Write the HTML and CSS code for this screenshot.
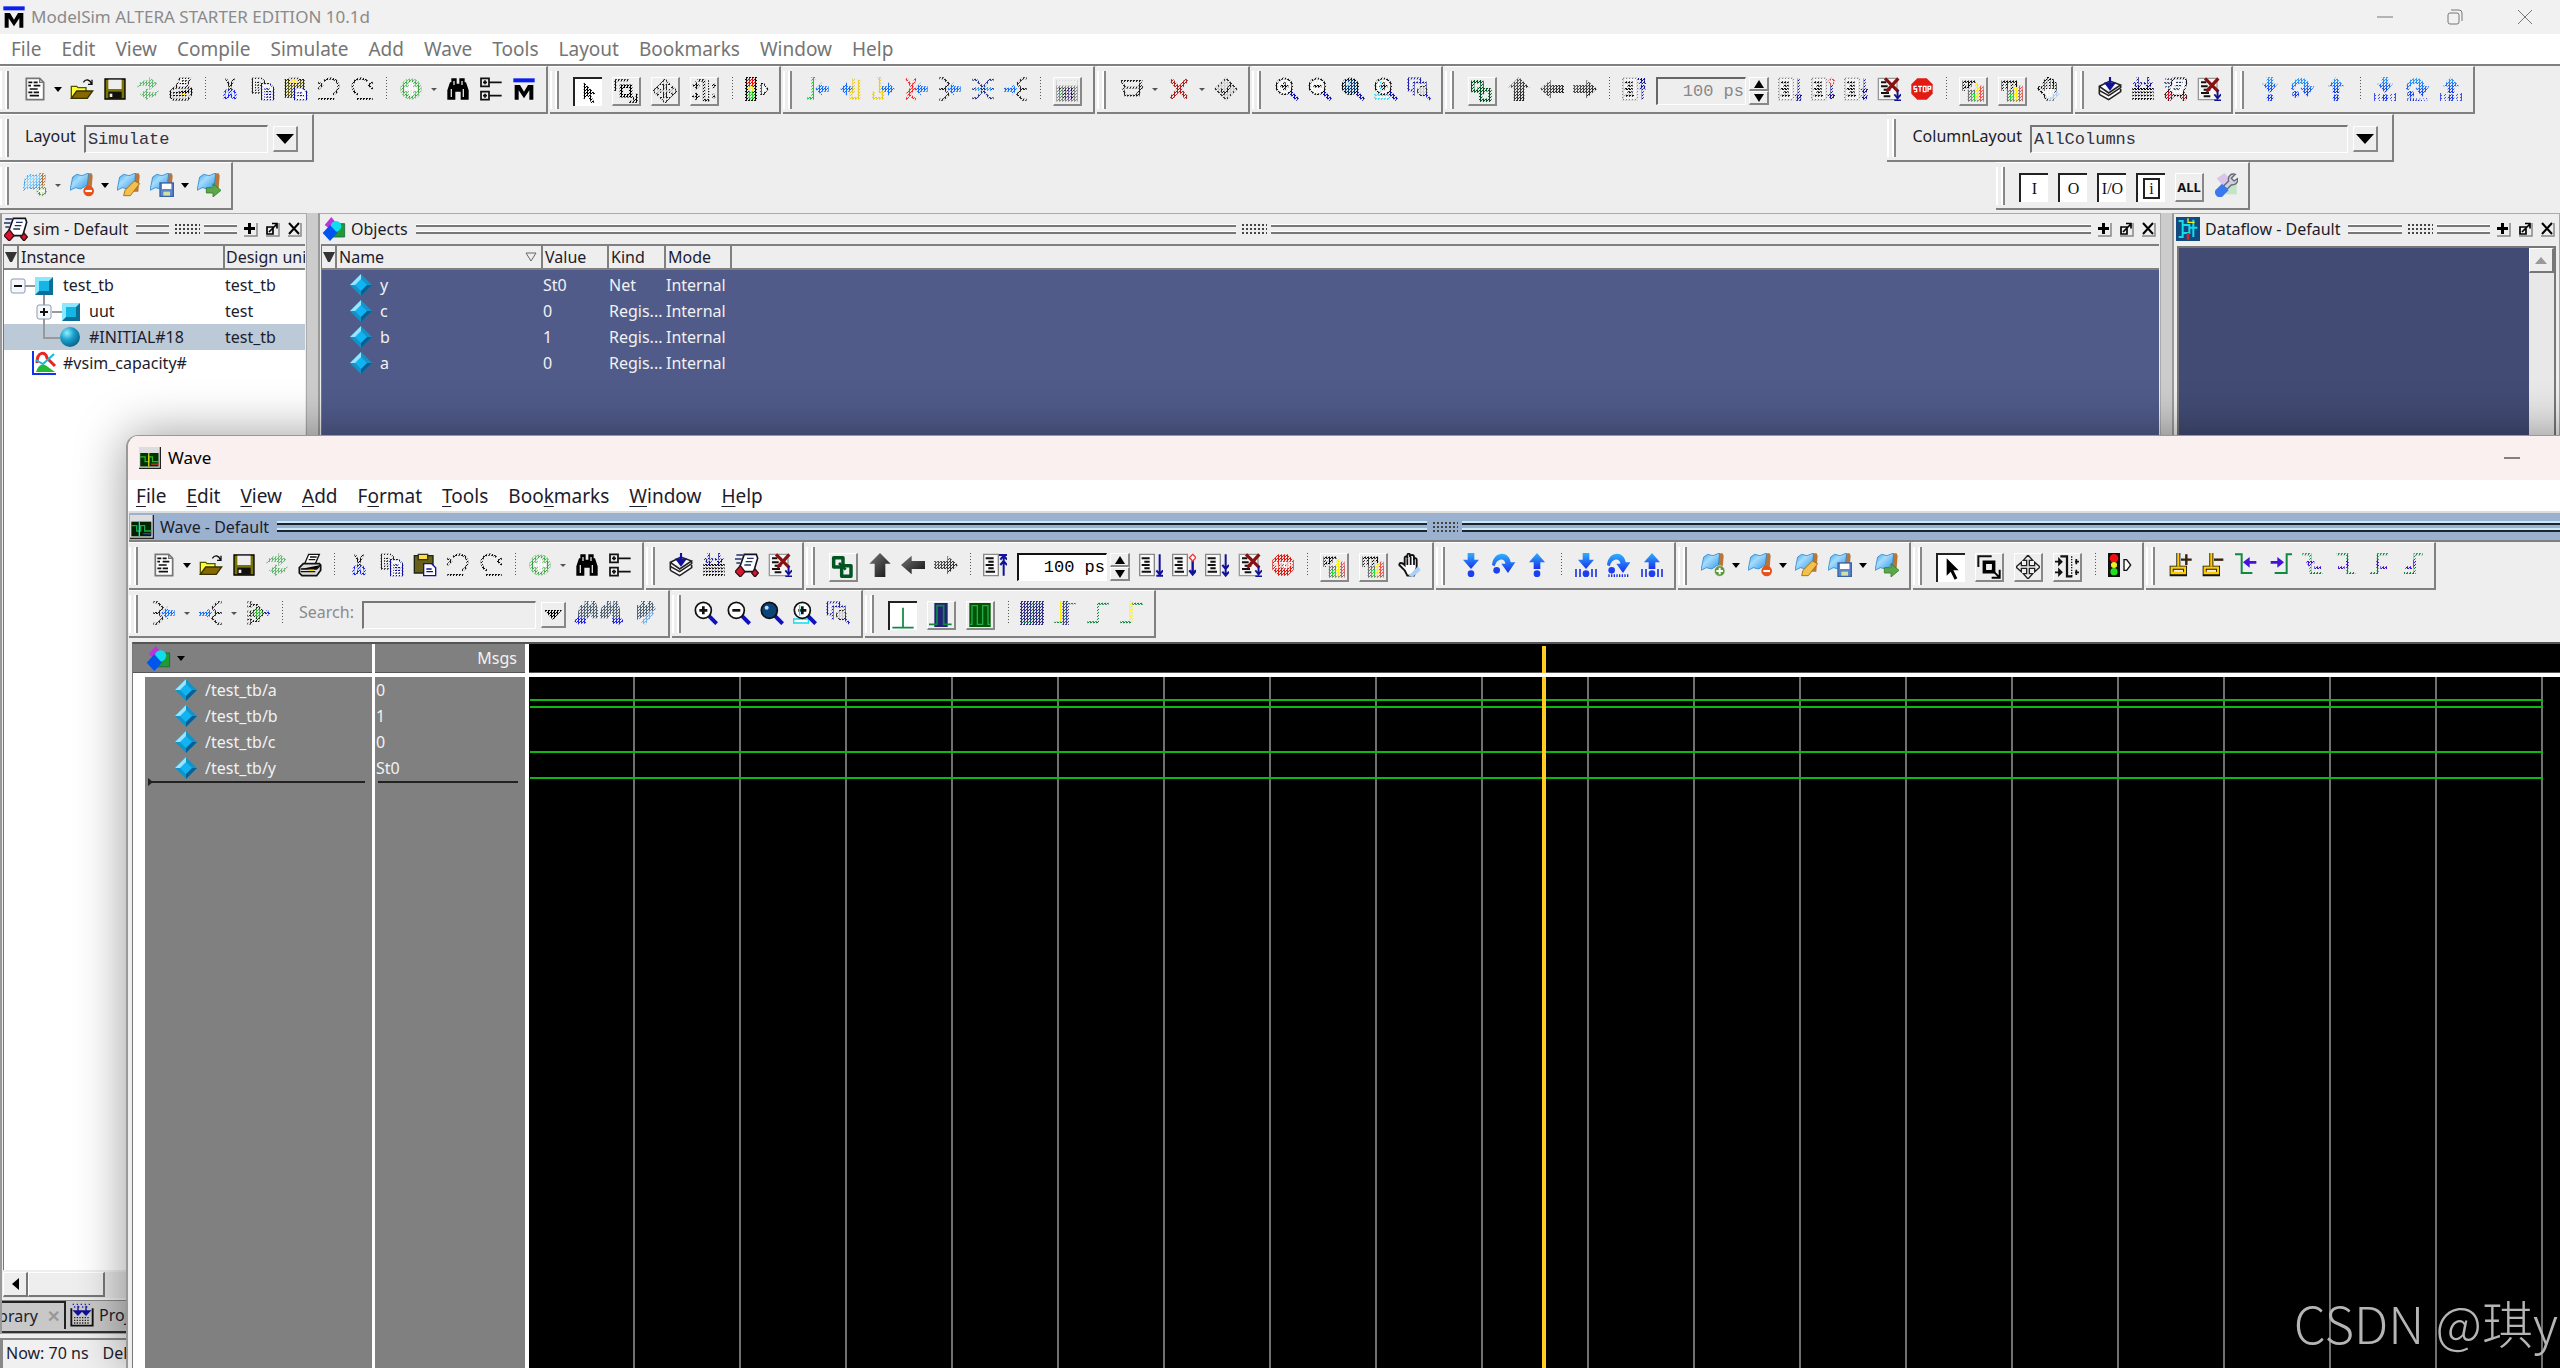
FILE: index.html
```html
<!DOCTYPE html>
<html lang="en">
<head>
<meta charset="utf-8">
<title>ModelSim ALTERA STARTER EDITION 10.1d</title>
<link rel="stylesheet" href="styles.css">
</head>
<body>
<svg class="sprite" aria-hidden="true">
  <defs>
    <linearGradient id="gDark" x1="0" y1="0" x2="1" y2="1"><stop offset="0" stop-color="#777"/><stop offset="1" stop-color="#111"/></linearGradient>
    <linearGradient id="gBlue" x1="0" y1="0" x2="0" y2="1"><stop offset="0" stop-color="#2fb0ff"/><stop offset="1" stop-color="#1a30e8"/></linearGradient>
    <radialGradient id="gBall" cx=".35" cy=".3" r=".7"><stop offset="0" stop-color="#8ff0ff"/><stop offset=".5" stop-color="#1ba0cc"/><stop offset="1" stop-color="#0a6890"/></radialGradient>
    <linearGradient id="gFlag" x1="0" y1="0" x2="1" y2="1"><stop offset="0" stop-color="#2f9be8"/><stop offset=".4" stop-color="#a5dcff"/><stop offset="1" stop-color="#2b92e0"/></linearGradient>
  </defs>
  <symbol id="logo" viewBox="0 0 18 18"><path d="M1 1h16v3H1z" fill="#0a20f0"/><path d="M2 17V6h4l3 5 3-5h4v11h-3v-7l-4 6-4-6v7z" fill="#000"/></symbol>
  <symbol id="new" viewBox="0 0 18 18"><path d="M2.500 1h10l3 3v13h-13z" fill="#fff" stroke="#777" stroke-width="1.300"/><path d="M4 4h3M8 4h3M4 6.500h2M8 6.500h5M5 9h6M4 11.500h3M8 11.500h4M5 14h7" stroke="#111" stroke-width="1.300"/><path d="M12.500 1v3h3" fill="none" stroke="#777"/></symbol>
  <symbol id="open" viewBox="0 0 18 18"><path d="M1 16V7h4l1 1h6v3" fill="#ff3" stroke="#550"/><path d="M1 16l4-5.500h12L13 16z" fill="#860" stroke="#330"/><path d="M10 4c2-3 5-2 6 1M16.500 2v3.500h-3" fill="none" stroke="#111"/></symbol>
  <symbol id="save" viewBox="0 0 18 18"><path d="M1.500 1.500h15v15h-15z" fill="#7a7400" stroke="#000"/><path d="M4 2h10v7H4z" fill="#eee"/><path d="M4 11h10v5H4z" fill="#111"/><path d="M5 12.500h2V15H5z" fill="#eee"/></symbol>
  <symbol id="reload" viewBox="0 0 18 18"><path d="M1 8c1-5 5-6 9-5V0l6 5-6 5V7C6 6 3 6 1 8zM17 10c-1 5-5 6-8 5v3l-6-5 6-5v3c4 1 6 1 8-1z" fill="#6ab878"/></symbol>
  <symbol id="print" viewBox="0 0 18 18"><path d="M5 8l3-7h8l-3 7" fill="#fff" stroke="#111"/><path d="M1 11l3-3h12l1 1v4l-3 4H3l-2-2z" fill="#ddd" stroke="#111" stroke-width="1.300"/><path d="M2 12h12l3-3M9 3h5M8 5h5M2 14h11" stroke="#111"/><path d="M8 12.500h4v1H8z" fill="#fd0"/></symbol>
  <symbol id="cut" viewBox="0 0 18 18"><path d="M6 1l4 9M12 1L8 10" stroke="#111" stroke-width="1.500"/><path d="M9 10c-4-1-5 3-4 6 3 0 4-3 4-6 0 3 1 6 4 6 1-3 0-7-4-6" fill="none" stroke="#12f" stroke-width="1.500"/></symbol>
  <symbol id="copy" viewBox="0 0 18 18"><path d="M1 1h7l2 2v9H1zM3 4h4M3 6h5M3 8h5M3 10h4" fill="none" stroke="#222"/><path d="M8 5h6l3 3v9H8z" fill="#fff" stroke="#119"/><path d="M10 9h4M10 11h6M10 13h6M10 15h6" stroke="#119"/></symbol>
  <symbol id="paste" viewBox="0 0 18 18"><path d="M1 2h14v13H1z" fill="#66601a" stroke="#221"/><path d="M4 1h7v4H4z" fill="#fd4" stroke="#332"/><path d="M8 8h6l3 3v6H8z" fill="#fff" stroke="#119"/><path d="M10 12h4M10 14h5" stroke="#119"/></symbol>
  <symbol id="undo" viewBox="0 0 18 18"><path d="M5 3c5-4 11-1 11 4 0 3-1 5-4 6M1 4l3 2-3 3M1 16.500h12" fill="none" stroke="#111" stroke-width="1.500"/></symbol>
  <symbol id="redo" viewBox="0 0 18 18"><path d="M13 3C8-1 2 2 2 7c0 3 1 5 4 6M17 4l-3 2 3 3M5 16.500h12" fill="none" stroke="#111" stroke-width="1.500"/></symbol>
  <symbol id="plus" viewBox="0 0 18 18"><circle cx="9" cy="9" r="8" fill="#7fc97f"/><circle cx="9" cy="9" r="6" fill="none" stroke="#3a9a4a"/><path d="M9 4v10M4 9h10" stroke="#fff" stroke-width="3"/></symbol>
  <symbol id="find" viewBox="0 0 18 18"><path d="M3 4h1V1h4v4h2V1h4v3h1l2 6v7h-6v-6H7v6H1v-7z"/><path d="M4 9v6M13 9v6M6 3v3M12 3v3" stroke="#ddd"/></symbol>
  <symbol id="tree" viewBox="0 0 18 18"><path d="M1.500 1h6v6h-6zM1.500 11h6v6h-6zM8 4h9M8 14h9M3 4h3M3 14h3M4.500 2.500v3M4.500 12.500v3" fill="none" stroke="#111" stroke-width="1.300"/></symbol>
  <symbol id="pointer" viewBox="0 0 18 18"><path d="M5 1v13l3-3 3 6 2-1-3-6h4z" fill="#000"/></symbol>
  <symbol id="zoomsel" viewBox="0 0 18 18"><path d="M1 9V1h10" fill="none" stroke="#111" stroke-width="1.500"/><path d="M5.500 5.500h7v7h-7z" fill="none" stroke="#000" stroke-width="2.600"/><path d="M11 11l6 6M17 11v6h-6" stroke="#000" fill="none" stroke-width="1.500"/></symbol>
  <symbol id="pan" viewBox="0 0 18 18"><path d="M9 0l3.500 4H10v4h4V5.500L18 9l-4 3.500V10h-4v4h2.500L9 18l-3.500-4H8v-4H4v2.500L0 9l4-3.500V8h4V4H5.500z" fill="#eee" stroke="#222"/></symbol>
  <symbol id="edit" viewBox="0 0 18 18"><path d="M0 5h4M0 13h4M15 5h3M15 13h3M3 3l2 2-2 2zM3 11l2 2-2 2zM16 3v4M16 11v4" stroke="#111" stroke-width="1.300"/><path d="M4 1h5v15h4" fill="none" stroke="#111" stroke-width="1.700"/><path d="M12.500 1v15" stroke="#111" stroke-dasharray="1 1"/></symbol>
  <symbol id="light" viewBox="0 0 18 18"><path d="M0 0h9v18H0z" fill="#111"/><circle cx="4.500" cy="4" r="3.200" fill="#e11"/><circle cx="4.500" cy="9" r="2.300" fill="#ee2"/><circle cx="4.500" cy="14" r="2.700" fill="#2d2"/><path d="M12 5v8h2l3-4-3-4z" fill="#fff" stroke="#111"/></symbol>
  <symbol id="aL" viewBox="0 0 18 18"><path d="M7 9l5-5v3h5v4h-5v3z" fill="#1670ff"/></symbol>
  <symbol id="c1" viewBox="0 0 18 18"><path d="M7 1H5v15H1" fill="none" stroke="#1c3" stroke-width="2"/><use href="#aL"/></symbol>
  <symbol id="c2" viewBox="0 0 18 18"><path d="M1 9l5-5v3h5v4H6v3z" fill="#1670ff"/><path d="M11 1v10h-2v5h6V2" fill="none" stroke="#ec2" stroke-width="2"/></symbol>
  <symbol id="c3" viewBox="0 0 18 18"><path d="M17 9l-5-5v3H7v4h5v3z" fill="#1670ff"/><path d="M4 1h2v10h2v5H1v-5" fill="none" stroke="#ec2" stroke-width="2"/></symbol>
  <symbol id="c4" viewBox="0 0 18 18"><path d="M1 1l3 5 3 3-3 3-3 5M8 1L6 6l-4 6 6 5" fill="none" stroke="#f22" stroke-width="1.600"/><use href="#aL"/></symbol>
  <symbol id="c5" viewBox="0 0 18 18"><path d="M1 1h3l4 4-3 4H1M5 9l3 4-4 4H1" fill="none" stroke="#222" stroke-width="1.500"/><use href="#aL"/></symbol>
  <symbol id="c6" viewBox="0 0 18 18"><path d="M1 2h3l5 6 5-6h3M1 16h3l5-6 5 6h3M1 9h16" fill="none" stroke="#238" stroke-width="1.500"/><path d="M3 9h4M11 9h4" stroke="#3af" stroke-width="3"/></symbol>
  <symbol id="c7" viewBox="0 0 18 18"><path d="M17 1h-3l-4 4 3 4h4M13 9l-3 4 4 4h3" fill="none" stroke="#222" stroke-width="1.500"/><path d="M10 9L6 5v3H0v3h6v3z" fill="#1670ff"/></symbol>
  <symbol id="calc" viewBox="0 0 18 18"><path d="M1 1h16v16H1z" fill="#888"/><path d="M1 1h16v4H1z" fill="#eee"/><path d="M3 8h12M3 11h12M3 14h12" stroke="#123" stroke-width="2" stroke-dasharray="2 1"/><path d="M4 8v8" stroke="#2b6" stroke-width="2"/><path d="M11 8v8" stroke="#86c" stroke-width="2"/></symbol>
  <symbol id="expand" viewBox="0 0 18 18"><path d="M1 3h15l-2 5H4zM2 8l2 6h10l2-9M4 14h8l5-7" fill="none" stroke="#222" stroke-width="1.400"/></symbol>
  <symbol id="xred" viewBox="0 0 18 18"><path d="M3 2l12 14M15 2L3 16" stroke="#a22" stroke-width="3"/></symbol>
  <symbol id="dia" viewBox="0 0 18 18"><path d="M9 1l8 8-8 8-8-8z" fill="#ccc" stroke="#222"/><path d="M5 9l3 4M8 13l5-8" stroke="#222" stroke-width="2"/></symbol>
  <symbol id="zin" viewBox="0 0 18 18"><path d="M11 11l6 6" stroke="#11b" stroke-width="3"/><circle cx="7" cy="7" r="6" fill="#fff" stroke="#111" stroke-width="1.300"/><path d="M7 4v6M4 7h6" stroke="#111" stroke-width="2"/></symbol>
  <symbol id="zout" viewBox="0 0 18 18"><path d="M11 11l6 6" stroke="#11b" stroke-width="3"/><circle cx="7" cy="7" r="6" fill="#fff" stroke="#111" stroke-width="1.300"/><path d="M4 7h6" stroke="#111" stroke-width="2"/></symbol>
  <symbol id="zfull" viewBox="0 0 18 18"><path d="M11 11l6 6" stroke="#11b" stroke-width="3"/><circle cx="7" cy="7" r="6" fill="#0a4478" stroke="#111" stroke-width="1.300"/><circle cx="5" cy="5" r="1.500" fill="#bdf"/></symbol>
  <symbol id="zcur" viewBox="0 0 18 18"><path d="M.5 13.500h11v3H.5z" fill="#fff" stroke="#1de"/><use href="#zin"/><path d="M5 3v8" stroke="#1de"/></symbol>
  <symbol id="zrange" viewBox="0 0 18 18"><path d="M10 5V1H1v9h4M5 14V4h9v4" fill="none" stroke="#22a" stroke-width="1.400"/><circle cx="11.500" cy="10.500" r="3.500" fill="#ccc" stroke="#222"/><path d="M14 13l3.500 4" stroke="#22d" stroke-width="2"/></symbol>
  <symbol id="link" viewBox="0 0 18 18"><path d="M2 2h7v7H2zM8 8h7v8H8z" fill="none" stroke="#052" stroke-width="2.600" stroke-linejoin="round"/><path d="M6 6l5 5" stroke="#052" stroke-width="2"/></symbol>
  <symbol id="up" viewBox="0 0 18 18"><path d="M9 0l8 8h-4v10H5V8H1z" fill="url(#gDark)"/></symbol>
  <symbol id="left" viewBox="0 0 18 18"><path d="M0 9l8-7v4h10v6H8v4z" fill="url(#gDark)"/></symbol>
  <symbol id="right" viewBox="0 0 18 18"><path d="M18 9l-8-7v4H0v6h10v4z" fill="url(#gDark)"/></symbol>
  <symbol id="pg" viewBox="0 0 18 18"><path d="M.500 1h11v16h-11z" fill="#f8f8f8" stroke="#888"/><path d="M2 4h6M4 6.500h4M2 9h6M4 11.500h4M2 14h7" stroke="#111" stroke-width="1.500"/></symbol>
  <symbol id="restart" viewBox="0 0 18 18"><use href="#pg"/><path d="M15.500 1v16M12 1.500h6M13 5l2.500-3L18 5M13 9l2.500-3L18 9" fill="none" stroke="#119" stroke-width="1.500"/></symbol>
  <symbol id="run" viewBox="0 0 18 18"><use href="#pg"/><path d="M15.500 1v15M13 13l2.500 3L18 13M13 17h5" fill="none" stroke="#119" stroke-width="1.500"/></symbol>
  <symbol id="runc" viewBox="0 0 18 18"><use href="#pg"/><path d="M15.500 6v10M13 13l2.500 3L18 13" fill="none" stroke="#119" stroke-width="1.800"/><path d="M15.500 1L18 3.500 15.500 6 13 3.500z" fill="#fff" stroke="#e33"/></symbol>
  <symbol id="runa" viewBox="0 0 18 18"><use href="#pg"/><path d="M15.500 1v16M13 9l2.500 3L18 9M13 14l2.500 3L18 14" fill="none" stroke="#119" stroke-width="1.500"/></symbol>
  <symbol id="brk" viewBox="0 0 18 18"><path d="M1 1h14v16H1z" fill="#f4f4f4" stroke="#999"/><path d="M3 4h4M3 7h5M5 9.500h5M3 12h6M5 14.500h5" stroke="#111" stroke-width="1.500"/><path d="M6 1l10 10M16 1L7 11" stroke="#811" stroke-width="2.400"/><path d="M15.500 10v6M13 13l2.500 3L18 13M13 17.500h5" fill="none" stroke="#119" stroke-width="1.300"/></symbol>
  <symbol id="stop" viewBox="0 0 18 18"><path d="M5.500 1h7L17 5.500v7L12.500 17h-7L1 12.500v-7z" fill="#e21b12"/><path d="M5 7H3v2h2v2H3M6 7h3M7.500 7v4M10 7h2v4h-2zM13.500 11V7h2v2h-2" fill="none" stroke="#fff"/></symbol>
  <symbol id="perf" viewBox="0 0 18 18"><path d="M5 8h12v9H5z" fill="#777"/><path d="M12 3v13" stroke="#fe0" stroke-width="3"/><path d="M15.500 5v11" stroke="#e55" stroke-width="3"/><path d="M9 11v5" stroke="#2d3" stroke-width="3"/><path d="M2 9V2h4v4H2M7 6V2h4" fill="none" stroke="#111" stroke-width="1.700"/></symbol>
  <symbol id="mem" viewBox="0 0 18 18"><path d="M5 8h12v9H5z" fill="#777"/><path d="M12 3v13" stroke="#fe0" stroke-width="3"/><path d="M15.500 5v11" stroke="#e55" stroke-width="3"/><path d="M9 11v5" stroke="#2d3" stroke-width="3"/><path d="M2 9V2h3v6M5 2h4v6M9 2h3v4" fill="none" stroke="#111" stroke-width="1.700"/></symbol>
  <symbol id="hand" viewBox="0 0 18 18"><path d="M5 13L1 9c0-2 2-2 4 0V4c0-2 2-2 2 0V2c0-2 2-2 2 0v1c0-2 3-2 3 0v2c0-2 2-1 2 0v6l-2 6H7z" fill="#fff" stroke="#111" stroke-width="1.400"/><path d="M7 4v5M9.500 3v6M12 4v5" stroke="#111" stroke-width="1.300"/><path d="M8 17l7-7 2 3-6 5z" fill="#acd0f4"/></symbol>
  <symbol id="compile" viewBox="0 0 18 18"><path d="M1 13l7 4 9-6V9M1 10l7 4 9-6V6M1 13V7l8-4 8 3-9 6-7-5" fill="#fff" stroke="#222" stroke-width="1.200"/><path d="M9 0v7M6 5l3 4 3-4z" stroke="#119" fill="#119" stroke-width="1.600"/></symbol>
  <symbol id="compall" viewBox="0 0 18 18"><path d="M1 9h16M1 11.500h16M1 14h16M1 16.500h16" stroke="#111" stroke-width="1.400"/><path d="M5 0v5M2 4l3 4 3-4M13 0v5M10 4l3 4 3-4" fill="none" stroke="#119" stroke-width="1.600"/></symbol>
  <symbol id="sim" viewBox="0 0 18 18"><path d="M7 1h9l1 3-3 10H5L3 12z" fill="#fff" stroke="#112" stroke-width="1.200"/><path d="M9 4h5M8 6.500h5M7 9h5M1 1.500h5M0 4.500h5M1 7.500h3" stroke="#236"/><path d="M4 9.500L7.500 14 4 18 0 14z" fill="#d13" stroke="#311"/><path d="M15 12l2.500 3-2.500 3-2.500-3z" fill="#d13" stroke="#311"/></symbol>
  <symbol id="sin" viewBox="0 0 18 18"><path d="M6.500 0h5v5H15l-6 7-6-7h3.500z" fill="url(#gBlue)"/><circle cx="9" cy="15.500" r="2.500" fill="#1a40f0"/></symbol>
  <symbol id="sover" viewBox="0 0 18 18"><path d="M0 9C1-2 13-2 14 7h3.500L12 15 7 8h3c0-4-6-5-8 2z" fill="url(#gBlue)"/><circle cx="3.500" cy="13" r="2.500" fill="#1a40f0"/></symbol>
  <symbol id="sout" viewBox="0 0 18 18"><path d="M9 0l6 7h-3.500v5h-5V7H3z" fill="url(#gBlue)"/><circle cx="9" cy="15.500" r="2.500" fill="#1a40f0"/></symbol>
  <symbol id="bars" viewBox="0 0 18 18"><path d="M1.500 12v6M4.500 12v6M13.500 12v6M16.500 12v6" stroke="#1a30e8" stroke-width="1.200"/></symbol>
  <symbol id="hin" viewBox="0 0 18 18"><use href="#sin"/><use href="#bars"/></symbol>
  <symbol id="hover" viewBox="0 0 18 18"><use href="#sover"/><path d="M1 17h16" stroke="#1a30e8" stroke-width="2" stroke-dasharray="1 1"/></symbol>
  <symbol id="hout" viewBox="0 0 18 18"><use href="#sout"/><use href="#bars"/></symbol>
  <symbol id="flag" viewBox="0 0 18 18"><path d="M12 1l4-1 1 2-1 12h-4z" fill="#b8763a"/><path d="M2 3l3-2 4 1 5-2-1 9-5 3-4-1-4 2z" fill="url(#gFlag)" stroke="#2a86cc" stroke-width=".6"/></symbol>
  <symbol id="fadd" viewBox="0 0 18 18"><use href="#flag"/><circle cx="14" cy="13.500" r="4" fill="#5a9a3a" stroke="#eee" stroke-width=".5"/><path d="M14 11v5M11.500 13.500h5" stroke="#fff" stroke-width="1.500"/></symbol>
  <symbol id="fdel" viewBox="0 0 18 18"><use href="#flag"/><circle cx="14" cy="13.500" r="4" fill="#e8501a"/><path d="M11.500 13.500h5" stroke="#fff" stroke-width="1.600"/></symbol>
  <symbol id="fedit" viewBox="0 0 18 18"><use href="#flag"/><path d="M5 17l1-4 7-7 4 2-7 9z" fill="#f3c04a" stroke="#a66c1a" stroke-width=".7"/></symbol>
  <symbol id="fsave" viewBox="0 0 18 18"><use href="#flag"/><path d="M7.500 7.500h10v10h-10z" fill="#5c86d0" stroke="#3a62a8"/><path d="M9 8h7v4H9z" fill="#fff"/><path d="M10 14h5v3h-5z" fill="#cfe0a0"/></symbol>
  <symbol id="fgo" viewBox="0 0 18 18"><use href="#flag"/><path d="M7 11h5V8l6 5-6 5v-3H7z" fill="#5aa84a" stroke="#2d7a2a" stroke-width=".6"/></symbol>
  <symbol id="wrench" viewBox="0 0 18 18"><path d="M2 4l6-4 4 5-5 5z" fill="#dcc4e8"/><path d="M9 8h8v8H9z" fill="#c4e4c8"/><path d="M7 10l4-4c-1-4 2-6 5-5l-3 3 2 2 3-2c0 4-2 5-5 5l-3 3z" fill="#ccd2da" stroke="#667"/><path d="M6 8l5 5-5 5c-4 1-6-2-5-5z" fill="#3a78f0"/></symbol>
  <symbol id="g1" viewBox="0 0 18 18"><path d="M9 2v15M1 17h16" stroke="#184" fill="none" stroke-width="1.300"/></symbol>
  <symbol id="g2" viewBox="0 0 18 18"><path d="M4 0h10v18H4z" fill="#227"/><path d="M0 16h6V2h5v14h6" stroke="#184" fill="none" stroke-width="1.300"/></symbol>
  <symbol id="g3" viewBox="0 0 18 18"><path d="M1 0h16v18H1z" fill="#050"/><path d="M1 16h2V2h4v14h4V2h4v14h2" stroke="#2a5" fill="none"/></symbol>
  <symbol id="g4" viewBox="0 0 18 18"><path d="M0 0h18v18H0z" fill="#338"/><path d="M2 16h7V2h7" stroke="#184" fill="none"/></symbol>
  <symbol id="g5" viewBox="0 0 18 18"><path d="M7 0h5v18H7z" fill="#449"/><path d="M6 0v16" stroke="#fe0" stroke-width="1.500"/><path d="M1 16h6M9 16V2h8" stroke="#184" fill="none"/></symbol>
  <symbol id="g6" viewBox="0 0 18 18"><path d="M1 16h8V2h8" stroke="#184" fill="none" stroke-width="1.500"/></symbol>
  <symbol id="g7" viewBox="0 0 18 18"><path d="M9 0v16" stroke="#fe0" stroke-width="2"/><path d="M1 16h8M10 2h8" stroke="#184" fill="none" stroke-width="1.500"/></symbol>
  <symbol id="curadd" viewBox="0 0 18 18"><path d="M7 0v11M2 16h10v-5H2z" fill="none" stroke="#111" stroke-width="3"/><path d="M7 0v10M2 15h10v-4H2z" fill="none" stroke="#fc0" stroke-width="1.700"/><path d="M9 5h8M13 1v8" stroke="#321" stroke-width="1.800"/></symbol>
  <symbol id="curdel" viewBox="0 0 18 18"><path d="M7 0v11M2 16h10v-5H2z" fill="none" stroke="#111" stroke-width="3"/><path d="M7 0v10M2 15h10v-4H2z" fill="none" stroke="#fc0" stroke-width="1.700"/><path d="M9 5h7" stroke="#321" stroke-width="1.800"/></symbol>
  <symbol id="prevt" viewBox="0 0 18 18"><path d="M0 1h5v14h8" fill="none" stroke="#184" stroke-width="1.500"/><path d="M6 7l5-4v3h5v2h-5v3z" fill="#41d"/></symbol>
  <symbol id="nextt" viewBox="0 0 18 18"><path d="M18 1h-4v14H5" fill="none" stroke="#184" stroke-width="1.500"/><path d="M12 7L7 3v3H2v2h5v3z" fill="#41d"/></symbol>
  <symbol id="e1" viewBox="0 0 18 18"><path d="M1 1h6v14h9" fill="none" stroke="#184" stroke-width="1.500"/><path d="M4 7h6M7 10l-2-3M10 11h5" stroke="#41d" stroke-width="2"/></symbol>
  <symbol id="e2" viewBox="0 0 18 18"><path d="M2 1h8v14h6" fill="none" stroke="#184" stroke-width="1.500"/><path d="M3 11h5M10 5v6" stroke="#41d" stroke-width="2"/></symbol>
  <symbol id="e3" viewBox="0 0 18 18"><path d="M16 1H8v14H2" fill="none" stroke="#184" stroke-width="1.500"/><path d="M10 11h5M8 5v6" stroke="#41d" stroke-width="2"/></symbol>
  <symbol id="e4" viewBox="0 0 18 18"><path d="M17 1h-6v14H3" fill="none" stroke="#184" stroke-width="1.500"/><path d="M4 11h5M11 5v6" stroke="#41d" stroke-width="2"/></symbol>
  <symbol id="anno" viewBox="0 0 18 18"><path d="M1 1h3v3H1M5 3h4M1 8h3v3H1M1 14h3v3H1M5 15h5" fill="none" stroke="#222" stroke-width="1.400"/><path d="M9 4l5 5-5 5-5-5z" fill="#3b3" stroke="#222"/><path d="M14 9h4M16 7v4" stroke="#22e" stroke-width="1.500"/></symbol>
  <symbol id="fprev" viewBox="0 0 18 18"><path d="M5 3h3V0h3v3h2V0h3l2 6v7h-5V8l-2 5H3V8z" fill="#567"/><path d="M0 15l4-4v2h5v4H4v1z" fill="#22e"/></symbol>
  <symbol id="fnext" viewBox="0 0 18 18"><path d="M2 3h3V0h3v3h2V0h3l2 6v7H9V8l-3 5H0V8z" fill="#567"/><path d="M18 15l-4-4v2H9v4h5v1z" fill="#22e"/></symbol>
  <symbol id="fopt" viewBox="0 0 18 18"><path d="M3 3h3V0h3v3h2V0h3l3 6-5 4-9 4V7z" fill="#567"/><path d="M6 16l7-9 3 2-7 9z" fill="#7ab0e8"/></symbol>
  <symbol id="shapes" viewBox="0 0 18 18"><path d="M8 5h9v10H8z" fill="#293" stroke="#164" stroke-width=".6"/><path d="M2 6l5-6 4 5-5 4z" fill="#b3d"/><circle cx="10.500" cy="7" r="4" fill="#1de"/><path d="M6 6l5.500 6L6 18 .500 12z" fill="#05e"/></symbol>
  <symbol id="waveico" viewBox="0 0 18 18"><path d="M0 0h18v18H0z" fill="#222"/><path d="M0 0h17v17H0z" fill="#ddd"/><path d="M1 5h15v11H1z" fill="#030"/><path d="M1 8h4v4h3V8h3v4h5" fill="none" stroke="#2b2"/><path d="M8 5v11" stroke="#ed1"/><path d="M10 14h6" stroke="#d33"/></symbol>
  <symbol id="wavedock" viewBox="0 0 18 18"><path d="M0 0h18v18H0z" fill="#222"/><path d="M0 0h17v17H0z" fill="#ddd"/><path d="M1 5h15v11H1z" fill="#020"/><path d="M1 8h4v4h3V8h3v4h5" fill="none" stroke="#1a4"/><path d="M7 5v11" stroke="#1de"/><path d="M10 14h6" stroke="#33d"/></symbol>
  <symbol id="flow" viewBox="0 0 18 18"><path d="M0 0h18v18H0z" fill="#124a80"/><path d="M2 3h3v12H2M5 6h5v6H5M10 8h6M13 2v13" fill="none" stroke="#1de" stroke-width="1.500"/><path d="M9 1v3h5" fill="none" stroke="#ee2"/><path d="M9 12v5" stroke="#d22" stroke-width="2"/></symbol>
  <symbol id="proj" viewBox="0 0 18 18"><path d="M1 4v13h16V4" fill="none" stroke="#111" stroke-width="1.400"/><path d="M3 11h12M3 13h12M3 15h12" stroke="#222" stroke-dasharray="1 1"/><path d="M2 1h14M3 3h12" stroke="#22b" stroke-dasharray="1 2"/><path d="M6 2v4M3 6h6L6 9zM12 2v4M9 6h6l-3 3z" fill="#119" stroke="#119"/></symbol>
  <symbol id="gem" viewBox="0 0 22 22"><path d="M11 0l11 11-11 11L0 11z" fill="#1294c8"/><path d="M11 0v6l-5 5H0z" fill="#9be4ff"/><path d="M22 11h-6l-5 5v6z" fill="#0a5f92"/><path d="M11 5l6 6-6 6-6-6z" fill="#10b4f2"/></symbol>
  <symbol id="padd" viewBox="0 0 15 15"><path d="M14 1v13H1" fill="none" stroke="#888" stroke-width="1.500"/><path d="M1 6.500h11M6.500 1v11" stroke="#000" stroke-width="3"/></symbol>
  <symbol id="pout" viewBox="0 0 15 15"><path d="M14 1v13H1" fill="none" stroke="#888" stroke-width="1.500"/><path d="M2 5h6v7H2zM4 10l8-8M7 1.500h5v5" fill="none" stroke="#000" stroke-width="1.700"/></symbol>
  <symbol id="pcls" viewBox="0 0 15 15"><path d="M14 1v13H1" fill="none" stroke="#888" stroke-width="1.500"/><path d="M2 1l10 11M12 1L2 12" stroke="#000" stroke-width="2"/></symbol>
  <symbol id="down" viewBox="0 0 18 10"><path d="M0 0h18l-9 10z"/></symbol>
  <symbol id="cube" viewBox="0 0 18 18"><path d="M0 0h18v18H0z" fill="#0b6f96"/><path d="M0 0h18l-4 4H4v10l-4 4z" fill="#8be8ff"/><path d="M4 4h10v10H4z" fill="#14b6e6"/></symbol>
  <symbol id="box" viewBox="0 0 16 16"><rect x="1" y="1" width="14" height="14" rx="2" fill="#f6f8fb" stroke="#8b9ab0"/><path d="M4 8h8" stroke="#111" stroke-width="2"/></symbol>
  <symbol id="plusbox" viewBox="0 0 16 16"><use href="#box"/><path d="M8 4v8" stroke="#111" stroke-width="2"/></symbol>
</svg>

<div class="app">
  <header class="caption">
    <svg class="capicon"><use href="#logo"/></svg>
    <span class="captext">ModelSim ALTERA STARTER EDITION 10.1d</span>
    <button class="win" aria-label="Minimize"><svg viewBox="0 0 16 16"><path d="M0 8h16"/></svg></button>
    <button class="win" aria-label="Restore"><svg viewBox="0 0 16 16"><rect x="1" y="4" width="11" height="11" rx="2"/><path d="M4 1h8q3 0 3 3v8"/></svg></button>
    <button class="win" aria-label="Close"><svg viewBox="0 0 16 16"><path d="M1 1l14 14M15 1L1 15"/></svg></button>
  </header>
  <nav class="menu dim">
    <a href="#">File</a><a href="#">Edit</a><a href="#">View</a><a href="#">Compile</a><a href="#">Simulate</a><a href="#">Add</a><a href="#">Wave</a><a href="#">Tools</a><a href="#">Layout</a><a href="#">Bookmarks</a><a href="#">Window</a><a href="#">Help</a>
  </nav>

  <div class="bars">
    <div class="barrow">
      <div class="bar">
        <button class="t" aria-label="New"><svg><use href="#new"/></svg></button><span class="caret"></span>
        <button class="t" aria-label="Open"><svg><use href="#open"/></svg></button>
        <button class="t" aria-label="Save"><svg><use href="#save"/></svg></button>
        <button class="t" aria-label="Reload"><svg class="off"><use href="#reload"/></svg></button>
        <button class="t" aria-label="Print"><svg class="off"><use href="#print"/></svg></button><span class="sep"></span>
        <button class="t" aria-label="Cut"><svg class="off"><use href="#cut"/></svg></button>
        <button class="t" aria-label="Copy"><svg class="off"><use href="#copy"/></svg></button>
        <button class="t" aria-label="Paste"><svg class="off"><use href="#paste"/></svg></button>
        <button class="t" aria-label="Undo"><svg class="off"><use href="#undo"/></svg></button>
        <button class="t" aria-label="Redo"><svg class="off"><use href="#redo"/></svg></button><span class="sep"></span>
        <button class="t" aria-label="Add"><svg class="off"><use href="#plus"/></svg></button><span class="caret small"></span>
        <button class="t" aria-label="Find"><svg><use href="#find"/></svg></button>
        <button class="t" aria-label="Collapse"><svg><use href="#tree"/></svg></button>
        <button class="t" aria-label="ModelSim"><svg><use href="#logo"/></svg></button>
      </div>
      <div class="bar">
        <button class="t box on" aria-label="Select"><svg class="off"><use href="#pointer"/></svg></button>
        <button class="t box" aria-label="Zoom mode"><svg class="off"><use href="#zoomsel"/></svg></button>
        <button class="t box" aria-label="Pan"><svg class="off"><use href="#pan"/></svg></button>
        <button class="t box" aria-label="Edit mode"><svg class="off"><use href="#edit"/></svg></button><span class="sep"></span>
        <button class="t" aria-label="Stop drawing"><svg class="off"><use href="#light"/></svg></button>
      </div>
      <div class="bar">
        <button class="t" aria-label="Show drivers"><svg class="off"><use href="#c1"/></svg></button>
        <button class="t" aria-label="Previous cursor"><svg class="off"><use href="#c2"/></svg></button>
        <button class="t" aria-label="Next cursor"><svg class="off"><use href="#c3"/></svg></button>
        <button class="t" aria-label="Trace X"><svg class="off"><use href="#c4"/></svg></button>
        <button class="t" aria-label="Expand to drivers"><svg class="off"><use href="#c5"/></svg></button>
        <button class="t" aria-label="Expand both"><svg class="off"><use href="#c6"/></svg></button>
        <button class="t" aria-label="Expand to readers"><svg class="off"><use href="#c7"/></svg></button><span class="sep"></span>
        <button class="t box" aria-label="Show wave"><svg class="off"><use href="#calc"/></svg></button>
      </div>
      <div class="bar">
        <button class="t" aria-label="Expand"><svg class="off"><use href="#expand"/></svg></button><span class="caret small"></span>
        <button class="t" aria-label="Delete"><svg class="off"><use href="#xred"/></svg></button><span class="caret small"></span>
        <button class="t" aria-label="Regenerate"><svg class="off"><use href="#dia"/></svg></button>
      </div>
      <div class="bar">
        <button class="t" aria-label="Zoom in"><svg class="off"><use href="#zin"/></svg></button>
        <button class="t" aria-label="Zoom out"><svg class="off"><use href="#zout"/></svg></button>
        <button class="t" aria-label="Zoom full"><svg class="off"><use href="#zfull"/></svg></button>
        <button class="t" aria-label="Zoom on cursor"><svg class="off"><use href="#zcur"/></svg></button>
        <button class="t" aria-label="Zoom range"><svg class="off"><use href="#zrange"/></svg></button>
      </div>
      <div class="bar">
        <button class="t box" aria-label="Link"><svg class="off"><use href="#link"/></svg></button>
        <button class="t" aria-label="Up"><svg class="off"><use href="#up"/></svg></button>
        <button class="t" aria-label="Back"><svg class="off"><use href="#left"/></svg></button>
        <button class="t" aria-label="Forward"><svg class="off"><use href="#right"/></svg></button><span class="sep"></span>
        <button class="t" aria-label="Restart"><svg class="off"><use href="#restart"/></svg></button>
        <input class="time dimtext" type="text" value="100 ps" aria-label="Run length">
        <span class="spin"><button aria-label="More"></button><button aria-label="Less"></button></span>
        <button class="t" aria-label="Run"><svg class="off"><use href="#run"/></svg></button>
        <button class="t" aria-label="Continue run"><svg class="off"><use href="#runc"/></svg></button>
        <button class="t" aria-label="Run all"><svg class="off"><use href="#runa"/></svg></button>
        <button class="t" aria-label="Break"><svg><use href="#brk"/></svg></button>
        <button class="t" aria-label="Stop"><svg><use href="#stop"/></svg></button><span class="sep"></span>
        <button class="t box" aria-label="Performance"><svg class="off"><use href="#perf"/></svg></button>
        <button class="t box" aria-label="Memory"><svg class="off"><use href="#mem"/></svg></button>
        <button class="t" aria-label="Edit"><svg class="off"><use href="#hand"/></svg></button>
      </div>
      <div class="bar">
        <button class="t" aria-label="Compile"><svg><use href="#compile"/></svg></button>
        <button class="t" aria-label="Compile all"><svg class="off"><use href="#compall"/></svg></button>
        <button class="t" aria-label="Simulate"><svg class="off"><use href="#sim"/></svg></button>
        <button class="t" aria-label="Break"><svg><use href="#brk"/></svg></button>
      </div>
      <div class="bar">
        <button class="t" aria-label="Step in"><svg class="off"><use href="#sin"/></svg></button>
        <button class="t" aria-label="Step over"><svg class="off"><use href="#sover"/></svg></button>
        <button class="t" aria-label="Step out"><svg class="off"><use href="#sout"/></svg></button><span class="sep"></span>
        <button class="t" aria-label="Step in instance"><svg class="off"><use href="#hin"/></svg></button>
        <button class="t" aria-label="Step over instance"><svg class="off"><use href="#hover"/></svg></button>
        <button class="t" aria-label="Step out instance"><svg class="off"><use href="#hout"/></svg></button>
      </div>
    </div>
    <div class="barrow">
      <div class="bar">
        <label class="lbl" for="layout">Layout</label>
        <select id="layout" class="sel selnarrow"><option>Simulate</option></select>
        <span class="drop"><svg><use href="#down"/></svg></span>
      </div>
      <div class="bar pushcol">
        <label class="lbl" for="cols">ColumnLayout</label>
        <select id="cols" class="sel selwide"><option>AllColumns</option></select>
        <span class="drop"><svg><use href="#down"/></svg></span>
      </div>
    </div>
    <div class="barrow">
      <div class="bar">
        <button class="t" aria-label="Add bookmark"><svg class="off"><use href="#fadd"/></svg></button><span class="caret small"></span>
        <button class="t" aria-label="Delete bookmark"><svg><use href="#fdel"/></svg></button><span class="caret"></span>
        <button class="t" aria-label="Manage bookmarks"><svg><use href="#fedit"/></svg></button>
        <button class="t" aria-label="Save bookmarks"><svg><use href="#fsave"/></svg></button><span class="caret"></span>
        <button class="t" aria-label="Go to bookmark"><svg><use href="#fgo"/></svg></button>
      </div>
      <div class="bar pushio">
        <button class="t box on io">I</button><button class="t box on io">O</button><button class="t box on io">I/O</button><button class="t box on io"><span class="frame">i</span></button><button class="t box io all">ALL</button>
        <button class="t" aria-label="Filter settings"><svg><use href="#wrench"/></svg></button>
      </div>
    </div>
  </div>

  <main class="panes">
    <section class="pane panesim">
      <div class="phead"><svg class="pic"><use href="#sim"/></svg><span>sim - Default</span><span class="ridge"></span><span class="dots"></span><span class="ridge"></span>
        <button class="pb" aria-label="Add"><svg><use href="#padd"/></svg></button><button class="pb" aria-label="Undock"><svg><use href="#pout"/></svg></button><button class="pb" aria-label="Close"><svg><use href="#pcls"/></svg></button></div>
      <div class="pbody white">
        <table class="grid">
          <colgroup><col class="w14"><col class="w206"><col class="wrest"></colgroup>
          <thead><tr><th><span class="tri"></span></th><th>Instance</th><th>Design unit</th></tr></thead>
          <tbody>
            <tr><td colspan="2"><div class="node"><svg class="lv1" viewBox="0 0 54 26"><path d="M20 14h12M40 22v4" stroke="#999" stroke-width="2"/><use href="#box" x="6" y="6" width="16" height="16"/><use href="#cube" x="31" y="5" width="18" height="18"/></svg>test_tb</div></td><td>test_tb</td></tr>
            <tr><td colspan="2"><div class="node"><svg class="lv2" viewBox="0 0 80 26"><path d="M40 0v26M48 14h10" stroke="#999" stroke-width="2"/><use href="#plusbox" x="32" y="6" width="16" height="16"/><use href="#cube" x="58" y="5" width="18" height="18"/></svg>uut</div></td><td>test</td></tr>
            <tr class="picked"><td colspan="2"><div class="node"><svg class="lv2" viewBox="0 0 80 26"><path d="M40 0v14h16" fill="none" stroke="#999" stroke-width="2"/><circle cx="66" cy="13" r="10" fill="url(#gBall)"/></svg>#INITIAL#18</div></td><td>test_tb</td></tr>
            <tr><td colspan="2"><div class="node"><svg class="lv1" viewBox="0 0 54 26"><path d="M29 1v23h23" fill="none" stroke="#13e" stroke-width="2"/><path d="M33 13c0-12 9-12 10-5l8 8" fill="none" stroke="#e22" stroke-width="3"/><path d="M32 22c3-9 8-9 12-5l7 5z" fill="#2b3"/><path d="M32 10l7 4 11-10" fill="none" stroke="#1bd" stroke-width="2"/></svg>#vsim_capacity#</div></td><td></td></tr>
          </tbody>
        </table>
      </div>
      <div class="hscroll"><span class="sbtn"><i></i></span><span class="thumb"></span></div>
      <div class="tabs"><button class="tab first">Library <b>✕</b></button><button class="tab"><svg><use href="#proj"/></svg>Project</button></div>
    </section>
    <section class="pane paneobj">
      <div class="phead"><svg class="pic"><use href="#shapes"/></svg><span>Objects</span><span class="ridge"></span><span class="dots"></span><span class="ridge"></span>
        <button class="pb" aria-label="Add"><svg><use href="#padd"/></svg></button><button class="pb" aria-label="Undock"><svg><use href="#pout"/></svg></button><button class="pb" aria-label="Close"><svg><use href="#pcls"/></svg></button></div>
      <div class="pbody navy">
        <table class="grid objs">
          <colgroup><col class="w14"><col class="w206"><col class="w66"><col class="w57"><col class="w66"><col class="wrest"></colgroup>
          <thead><tr><th><span class="tri"></span></th><th><span class="sorted">Name<svg viewBox="0 0 12 10"><path d="M1 1h10L6 9z"/></svg></span></th><th>Value</th><th>Kind</th><th>Mode</th><th></th></tr></thead>
          <tbody>
            <tr><td colspan="2"><div class="sig"><svg><use href="#gem"/></svg>y</div></td><td>St0</td><td>Net</td><td>Internal</td><td></td></tr>
            <tr><td colspan="2"><div class="sig"><svg><use href="#gem"/></svg>c</div></td><td>0</td><td>Regis...</td><td>Internal</td><td></td></tr>
            <tr><td colspan="2"><div class="sig"><svg><use href="#gem"/></svg>b</div></td><td>1</td><td>Regis...</td><td>Internal</td><td></td></tr>
            <tr><td colspan="2"><div class="sig"><svg><use href="#gem"/></svg>a</div></td><td>0</td><td>Regis...</td><td>Internal</td><td></td></tr>
          </tbody>
        </table>
      </div>
    </section>
    <section class="pane paneflow">
      <div class="phead"><svg class="pic"><use href="#flow"/></svg><span>Dataflow - Default</span><span class="ridge"></span><span class="dots"></span><span class="ridge"></span>
        <button class="pb" aria-label="Add"><svg><use href="#padd"/></svg></button><button class="pb" aria-label="Undock"><svg><use href="#pout"/></svg></button><button class="pb" aria-label="Close"><svg><use href="#pcls"/></svg></button></div>
      <div class="flowbody"><div class="canvas"></div><div class="vscroll"><span class="sbtn up"><i></i></span></div></div>
    </section>
  </main>
  <footer class="status"><span>Now: 70 ns</span><span>Delta: 0</span></footer>

  <section class="wave">
    <div class="wcap"><svg><use href="#waveico"/></svg><span>Wave</span><button class="win dark" aria-label="Minimize"><svg viewBox="0 0 16 16"><path d="M0 8h16"/></svg></button></div>
    <nav class="menu wmenu">
      <a href="#"><u>F</u>ile</a><a href="#"><u>E</u>dit</a><a href="#"><u>V</u>iew</a><a href="#"><u>A</u>dd</a><a href="#">F<u>o</u>rmat</a><a href="#"><u>T</u>ools</a><a href="#">Boo<u>k</u>marks</a><a href="#"><u>W</u>indow</a><a href="#"><u>H</u>elp</a>
    </nav>
    <div class="whead"><svg class="pic"><use href="#wavedock"/></svg><span>Wave - Default</span><span class="ridge blue"></span><span class="dots"></span><span class="ridge blue"></span></div>
    <div class="bars wbars">
      <div class="barrow">
        <div class="bar">
          <button class="t" aria-label="New"><svg><use href="#new"/></svg></button><span class="caret"></span>
          <button class="t" aria-label="Open"><svg><use href="#open"/></svg></button>
          <button class="t" aria-label="Save"><svg><use href="#save"/></svg></button>
          <button class="t" aria-label="Reload"><svg class="off"><use href="#reload"/></svg></button>
          <button class="t" aria-label="Print"><svg><use href="#print"/></svg></button><span class="sep"></span>
          <button class="t" aria-label="Cut"><svg class="off"><use href="#cut"/></svg></button>
          <button class="t" aria-label="Copy"><svg class="off"><use href="#copy"/></svg></button>
          <button class="t" aria-label="Paste"><svg><use href="#paste"/></svg></button>
          <button class="t" aria-label="Undo"><svg class="off"><use href="#undo"/></svg></button>
          <button class="t" aria-label="Redo"><svg class="off"><use href="#redo"/></svg></button><span class="sep"></span>
          <button class="t" aria-label="Add"><svg class="off"><use href="#plus"/></svg></button><span class="caret small"></span>
          <button class="t" aria-label="Find"><svg><use href="#find"/></svg></button>
          <button class="t" aria-label="Collapse"><svg><use href="#tree"/></svg></button>
        </div>
        <div class="bar">
          <button class="t" aria-label="Compile"><svg><use href="#compile"/></svg></button>
          <button class="t" aria-label="Compile all"><svg class="off"><use href="#compall"/></svg></button>
          <button class="t" aria-label="Simulate"><svg><use href="#sim"/></svg></button>
          <button class="t" aria-label="Break"><svg><use href="#brk"/></svg></button>
        </div>
        <div class="bar">
          <button class="t box" aria-label="Link"><svg><use href="#link"/></svg></button>
          <button class="t" aria-label="Up"><svg><use href="#up"/></svg></button>
          <button class="t" aria-label="Back"><svg><use href="#left"/></svg></button>
          <button class="t" aria-label="Forward"><svg class="off"><use href="#right"/></svg></button><span class="sep"></span>
          <button class="t" aria-label="Restart"><svg><use href="#restart"/></svg></button>
          <input class="time live" type="text" value="100 ps" aria-label="Run length">
          <span class="spin"><button aria-label="More"></button><button aria-label="Less"></button></span>
          <button class="t" aria-label="Run"><svg><use href="#run"/></svg></button>
          <button class="t" aria-label="Continue run"><svg><use href="#runc"/></svg></button>
          <button class="t" aria-label="Run all"><svg><use href="#runa"/></svg></button>
          <button class="t" aria-label="Break"><svg><use href="#brk"/></svg></button>
          <button class="t" aria-label="Stop"><svg class="off"><use href="#stop"/></svg></button><span class="sep"></span>
          <button class="t box" aria-label="Performance"><svg class="off"><use href="#perf"/></svg></button>
          <button class="t box" aria-label="Memory"><svg class="off"><use href="#mem"/></svg></button>
          <button class="t" aria-label="Edit"><svg><use href="#hand"/></svg></button>
        </div>
        <div class="bar">
          <button class="t" aria-label="Step in"><svg><use href="#sin"/></svg></button>
          <button class="t" aria-label="Step over"><svg><use href="#sover"/></svg></button>
          <button class="t" aria-label="Step out"><svg><use href="#sout"/></svg></button><span class="sep"></span>
          <button class="t" aria-label="Step in instance"><svg><use href="#hin"/></svg></button>
          <button class="t" aria-label="Step over instance"><svg><use href="#hover"/></svg></button>
          <button class="t" aria-label="Step out instance"><svg><use href="#hout"/></svg></button>
        </div>
        <div class="bar">
          <button class="t" aria-label="Add bookmark"><svg><use href="#fadd"/></svg></button><span class="caret"></span>
          <button class="t" aria-label="Delete bookmark"><svg><use href="#fdel"/></svg></button><span class="caret"></span>
          <button class="t" aria-label="Manage bookmarks"><svg><use href="#fedit"/></svg></button>
          <button class="t" aria-label="Save bookmarks"><svg><use href="#fsave"/></svg></button><span class="caret"></span>
          <button class="t" aria-label="Go to bookmark"><svg><use href="#fgo"/></svg></button>
        </div>
        <div class="bar">
          <button class="t box on" aria-label="Select"><svg><use href="#pointer"/></svg></button>
          <button class="t box" aria-label="Zoom mode"><svg><use href="#zoomsel"/></svg></button>
          <button class="t box" aria-label="Pan"><svg><use href="#pan"/></svg></button>
          <button class="t box" aria-label="Edit mode"><svg><use href="#edit"/></svg></button><span class="sep"></span>
          <button class="t" aria-label="Stop drawing"><svg><use href="#light"/></svg></button>
        </div>
        <div class="bar">
          <button class="t" aria-label="Insert cursor"><svg><use href="#curadd"/></svg></button>
          <button class="t" aria-label="Delete cursor"><svg><use href="#curdel"/></svg></button>
          <button class="t" aria-label="Previous transition"><svg><use href="#prevt"/></svg></button>
          <button class="t" aria-label="Next transition"><svg><use href="#nextt"/></svg></button>
          <button class="t" aria-label="Previous falling edge"><svg class="off"><use href="#e1"/></svg></button>
          <button class="t" aria-label="Next falling edge"><svg class="off"><use href="#e2"/></svg></button>
          <button class="t" aria-label="Previous rising edge"><svg class="off"><use href="#e3"/></svg></button>
          <button class="t" aria-label="Next rising edge"><svg class="off"><use href="#e4"/></svg></button>
        </div>
      </div>
      <div class="barrow">
        <div class="bar">
          <button class="t" aria-label="Drivers"><svg class="off"><use href="#c5"/></svg></button><span class="caret small"></span>
          <button class="t" aria-label="Readers"><svg class="off"><use href="#c7"/></svg></button><span class="caret small"></span>
          <button class="t" aria-label="Annotate"><svg class="off"><use href="#anno"/></svg></button><span class="sep"></span>
          <label class="lbl gray" for="find">Search:</label>
          <input id="find" class="sel search" type="text">
          <span class="drop"><svg class="off"><use href="#down"/></svg></span>
          <span class="finds"><button class="f" aria-label="Find previous"><svg class="off"><use href="#fprev"/></svg></button><button class="f" aria-label="Find next"><svg class="off"><use href="#fnext"/></svg></button></span>
          <button class="t" aria-label="Search options"><svg class="off"><use href="#fopt"/></svg></button>
        </div>
        <div class="bar">
          <button class="t" aria-label="Zoom in"><svg><use href="#zin"/></svg></button>
          <button class="t" aria-label="Zoom out"><svg><use href="#zout"/></svg></button>
          <button class="t" aria-label="Zoom full"><svg><use href="#zfull"/></svg></button>
          <button class="t" aria-label="Zoom on cursor"><svg><use href="#zcur"/></svg></button>
          <button class="t" aria-label="Zoom range"><svg class="off"><use href="#zrange"/></svg></button>
        </div>
        <div class="bar">
          <button class="t box on" aria-label="Time view"><svg><use href="#g1"/></svg></button>
          <button class="t box" aria-label="Event view"><svg><use href="#g2"/></svg></button>
          <button class="t box" aria-label="Delta view"><svg><use href="#g3"/></svg></button><span class="sep"></span>
          <button class="t" aria-label="Expand all"><svg class="off"><use href="#g4"/></svg></button>
          <button class="t" aria-label="Expand at cursor"><svg class="off"><use href="#g5"/></svg></button>
          <button class="t" aria-label="Collapse all"><svg class="off"><use href="#g6"/></svg></button>
          <button class="t" aria-label="Collapse at cursor"><svg class="off"><use href="#g7"/></svg></button>
        </div>
      </div>
    </div>
    <div class="wview">
      <div class="names">
        <div class="colhead"><svg><use href="#shapes"/></svg><span class="caret"></span></div>
        <ul class="list inset">
          <li><svg><use href="#gem"/></svg>/test_tb/a</li><li><svg><use href="#gem"/></svg>/test_tb/b</li><li><svg><use href="#gem"/></svg>/test_tb/c</li><li><svg><use href="#gem"/></svg>/test_tb/y</li>
          <li class="end mover"></li>
        </ul>
      </div>
      <div class="msgs">
        <div class="colhead">Msgs</div>
        <ul class="list"><li>0</li><li>1</li><li>0</li><li>St0</li><li class="end"></li></ul>
      </div>
      <div class="plot">
        <div class="colhead"></div>
        <div class="field"><div class="trace low"></div><div class="trace high"></div><div class="trace low"></div><div class="trace low"></div></div>
        <div class="cursor"></div>
      </div>
    </div>
  </section>
  <div class="mark">CSDN @琪y</div>
</div>
</body>
</html>
```
FILE: styles.css
```css
* { box-sizing: border-box; }
html, body { height: 100%; margin: 0; }
body { font: 16px/24px "Noto Sans", sans-serif; color: #1c1c2c; background: #eee; overflow: hidden; }
button { font: inherit; color: inherit; background: none; border: 0; padding: 0; margin: 0; }
a { color: inherit; text-decoration: none; }
ul { list-style: none; margin: 0; padding: 0; }
.sprite { display: block; width: 0; height: 0; }
svg { display: block; flex: none; }

.app { position: relative; height: 100vh; display: flex; flex-direction: column; overflow: hidden; background: #eee; }

/* title bar and menu */
.caption { display: flex; align-items: center; height: 34px; flex: none; background: #f1f1f1; padding-left: 2px; color: #8a8a8a; }
.capicon { width: 24px; height: 24px; }
.captext { font-size: 17px; margin-left: 5px; margin-right: auto; }
.win { width: 70px; display: flex; justify-content: center; }
.win svg { width: 16px; height: 16px; fill: none; stroke: #777; stroke-width: 1; }
.win.dark svg { stroke: #111; }
.menu { display: flex; gap: 20px; height: 30px; flex: none; padding-left: 11px; align-items: center; background: #fff; font-size: 19px; }
.menu.dim { color: #757575; }
.menu u { text-underline-offset: 3px; }

/* toolbars */
.bars { flex: none; border-top: 2px solid #808080; background: #eee; }
.barrow { display: flex; gap: 2px; height: 48px; }
.bar { display: flex; align-items: flex-start; height: 48px; flex: none; padding: 10px 6px 0 18px; border-right: 2px solid #808080; border-bottom: 2px solid #808080; border-top: 1px solid #fff;
  background: linear-gradient(90deg, #fff 2px, #eee 2px 5px, #fff 5px 7px, #888 7px 9px, #eee 9px) no-repeat 0 4px / 100% 38px; }
.t { width: 33px; display: flex; justify-content: center; flex: none; }
.t svg { width: 24px; height: 24px; }
.box { width: 29px; height: 29px; margin: 0 5px; align-items: center; border: 1px solid #fff; border-right: 2px solid #888; border-bottom: 2px solid #888; }
.box.on { background: #fff; border: 0; border-top: 2px solid #222; border-left: 2px solid #222; }
.io { font: 16px/24px "Liberation Serif", serif; color: #111; }
.io .frame { border: 2px solid #222; width: 17px; line-height: 17px; }
.io.all { font: bold 13px/24px "Noto Sans", sans-serif; }
.off { -webkit-mask: repeating-conic-gradient(#000 0 25%, rgba(0,0,0,.05) 0 50%) 0 0 / 3px 3px; mask: repeating-conic-gradient(#000 0 25%, rgba(0,0,0,.05) 0 50%) 0 0 / 3px 3px; }
.caret { width: 14px; height: 24px; display: flex; align-items: center; justify-content: center; flex: none; }
.caret::after { content: ""; border: 4px solid transparent; border-top: 5px solid #000; border-bottom: 0; }
.caret.small::after { border-width: 3px; border-top: 3px solid #555; border-bottom: 0; }
.sep { width: 16px; height: 24px; flex: none; background: repeating-linear-gradient(#555 0 1px, transparent 1px 3px) no-repeat 8px 0 / 1px 24px; }
.time { width: 90px; height: 28px; margin: 0 3px 0 6px; padding: 0 1px; text-align: right; border: 1px solid #fff; border-top: 2px solid #666; border-left: 2px solid #666; background: #eee; font: 17px/24px "Liberation Mono", monospace; }
.time.dimtext { color: #888; }
.time.live { background: #fff; border-color: #111 #fff #fff #111; }
.spin { display: flex; flex-direction: column; width: 20px; margin-right: 4px; flex: none; }
.spin button { height: 14px; display: flex; justify-content: center; align-items: center; border: 1px solid #fff; border-right: 2px solid #888; border-bottom: 2px solid #888; }
.spin button::after { content: ""; border: 5px solid transparent; border-bottom: 8px solid #000; border-top: 0; }
.spin button:last-child::after { border-bottom: 0; border-top: 8px solid #000; }
.lbl { margin: 0 8px 0 7px; line-height: 22px; }
.lbl.gray { color: #8a8a8a; margin: 0 8px 0 9px; }
.sel { appearance: none; height: 28px; padding: 0 2px; border: 1px solid #fff; border-top: 2px solid #777; border-left: 2px solid #777; border-radius: 0; background: #eee; color: #334; font: 17px/24px "Liberation Mono", monospace; }
.selnarrow { width: 184px; }
.selwide { width: 318px; }
.search { width: 174px; }
.drop { width: 25px; height: 26px; margin: 1px 8px 0 5px; display: flex; align-items: center; justify-content: center; border: 1px solid #fff; border-right: 2px solid #888; border-bottom: 2px solid #888; }
.drop svg { width: 18px; height: 10px; }
.finds { display: flex; gap: 2px; margin-right: 5px; }
.f svg { width: 24px; height: 24px; }
.pushcol { margin-left: auto; margin-right: 166px; }
.pushio { margin-left: auto; margin-right: 310px; }

/* docked panes */
.panes { display: flex; flex: 1; min-height: 0; gap: 11px; margin-top: 3px; background: #ccc; }
.pane { display: flex; flex-direction: column; background: #eee; border: 1px solid #aaa; border-left: 2px solid #999; min-width: 0; }
.panesim { width: 307px; flex: none; }
.paneobj { flex: 1; }
.paneflow { width: 388px; flex: none; }
.phead, .whead { display: flex; align-items: center; height: 30px; flex: none; padding: 0 4px 0 2px; white-space: nowrap; }
.pic { width: 24px; height: 24px; margin-right: 5px; }
.ridge { flex: 1; height: 10px; margin-left: 8px; background: linear-gradient(#fff 1px, #777 1px 3px, #eee 3px 7px, #fff 7px 8px, #777 8px 10px); }
.dots { width: 26px; height: 12px; margin-left: 5px; background: radial-gradient(circle, #444 1px, transparent 1px) 0 0 / 4px 4px; }
.dots + .ridge { margin-left: 4px; margin-right: 6px; }
.pb { width: 15px; margin-right: 7px; }
.pb:last-child { margin-right: 0; }
.pb svg { width: 15px; height: 15px; }
.pbody { flex: 1; min-height: 0; overflow: hidden; margin: 0 1px; border-left: 1px solid #777; }
.white { background: #fff; }
.navy { background: #505b8a; color: #f2f2f2; }
.grid { width: 100%; table-layout: fixed; border-collapse: separate; border-spacing: 0; white-space: nowrap; }
.grid th { height: 26px; padding: 0 0 0 2px; overflow: hidden; text-align: left; font-weight: 400; line-height: 22px; color: #1c1c2c; background: #eee; border-top: 2px solid #808080; border-bottom: 2px solid #808080; border-right: 2px solid #808080; }
.grid th:last-child { border-right: 0; padding-left: 1px; }
.grid td { height: 26px; padding: 0; line-height: 24px; }
.grid tbody::before { content: ""; display: block; height: 2px; }
.w14 { width: 15px; } .w206 { width: 206px; } .w66 { width: 66px; } .w57 { width: 57px; }
.tri { display: block; border: 5px solid transparent; border-top: 10px solid #333; border-bottom: 0; }
.grid th:first-child { padding-left: 1px; }
.sorted { display: flex; justify-content: space-between; align-items: center; padding-right: 4px; }
.sorted svg { width: 12px; height: 10px; fill: none; stroke: #666; }
.node { display: flex; align-items: center; gap: 5px; }
.lv1 { width: 54px; height: 26px; }
.lv2 { width: 80px; height: 26px; }
.picked td { background: #bccad8; }
.sig { display: flex; align-items: center; gap: 8px; padding-left: 28px; }
.sig svg { width: 22px; height: 22px; }
.hscroll { display: flex; height: 28px; flex: none; margin: 0 1px; border-top: 2px solid #eee; background: #e4e4e4; }
.sbtn { width: 25px; height: 25px; flex: none; display: flex; align-items: center; justify-content: center; background: #eee; border: 1px solid #fff; border-right: 2px solid #777; border-bottom: 2px solid #777; }
.sbtn i { border: 6px solid transparent; border-right: 7px solid #000; border-left: 0; }
.sbtn.up i { border: 6px solid transparent; border-bottom: 7px solid #999; border-top: 0; }
.thumb { width: 77px; height: 25px; background: #eee; border: 1px solid #fff; border-right: 2px solid #777; border-bottom: 2px solid #777; }
.tabs { display: flex; height: 33px; flex: none; margin-top: 2px; background: #c8c8c8; border-top: 1px solid #888; border-bottom: 2px solid #333; overflow: hidden; }
.tab { display: flex; align-items: center; gap: 5px; padding: 0 4px; border-right: 2px solid #222; height: 28px; }
.tab.first { width: 64px; justify-content: flex-end; white-space: nowrap; border-top: 2px solid #222; }
.tab b { color: #999; margin-left: 4px; }
.tab svg { width: 24px; height: 24px; }
.flowbody { flex: 1; display: flex; margin: 2px 3px 0; border: 2px solid #777; }
.canvas { flex: 1; background: #424b74; }
.vscroll { width: 25px; background: #e8e8e8; }
.status { display: flex; align-items: center; gap: 14px; height: 34px; flex: none; padding-left: 6px; border-top: 4px solid #eee; background: #f0f0f0; box-shadow: inset 3px 2px #888; }

/* floating wave window, runs past the right edge of the screen */
.wave { position: absolute; left: 126px; top: 435px; right: -130px; bottom: 0; display: flex; flex-direction: column; background: #eee; border: 1px solid #999; border-bottom: 0; border-left: 2px solid #999; border-radius: 12px 0 0 0; box-shadow: 0 0 50px rgba(0,0,0,.4); overflow: hidden; }
.wcap { display: flex; align-items: center; height: 44px; flex: none; background: #f9f0ef; padding-left: 11px; gap: 7px; color: #000; font-size: 17px; }
.wcap > svg { width: 22px; height: 22px; }
.wcap .win { margin-left: auto; margin-right: 142px; }
.wmenu { padding-left: 8px; height: 31px; color: #1c1c2c; }
.whead { height: 29px; margin-left: 1px; padding: 0 72px 0 1px; background: #9ab2cf; border-top: 2px solid #ddd; }
.ridge.blue { background: linear-gradient(#c8eaf8 2px, #1c2430 2px 4px, #9ab2cf 4px 7px, #c8eaf8 7px 9px, #1c2430 9px 11px); height: 11px; }
.whead .pic { margin-right: 6px; }
.wbars { margin-left: 1px; }
.wview { flex: 1; display: flex; margin: 4px 0 0 4px; background: #fff; color: #f2f2f2; border-top: 2px solid #555; border-left: 1px solid #777; }
.names { width: 239px; flex: none; display: flex; flex-direction: column; }
.msgs { width: 150px; flex: none; margin-left: 3px; display: flex; flex-direction: column; }
.colhead { height: 29px; flex: none; display: flex; align-items: center; padding: 0 8px 0 13px; background: #808080; border-bottom: 1px solid #555; }
.colhead svg { width: 25px; height: 25px; margin-right: 3px; }
.msgs .colhead { justify-content: flex-end; }
.list { flex: 1; background: #808080; margin-top: 4px; }
.inset { margin-left: 12px; }
.list li { height: 26px; display: flex; align-items: center; line-height: 24px; padding-left: 1px; }
.inset li { padding-left: 30px; gap: 8px; }
.list li svg { width: 22px; height: 22px; }
.list li.end { height: 2px; margin: 0 7px 0 3px; padding: 0; background: #222; }
.list li.mover::before { content: ""; border: 4px solid transparent; border-left: 5px solid #222; border-right: 0; }
.plot { flex: 1; position: relative; display: flex; flex-direction: column; margin-left: 4px; }
.plot .colhead { background: #000; }
.field { flex: 1; margin-top: 4px; padding: 0 146px 0 1px; background: repeating-linear-gradient(90deg, transparent 0 104px, #707070 104px 106px), #000; }
.trace { height: 26px; }
.trace::before { content: ""; display: block; height: 2px; background: #0fb80f; }
.low { padding-top: 22px; }
.high { padding-top: 3px; }
.cursor { position: absolute; left: 1013px; top: 2px; bottom: 0; width: 4px; background: linear-gradient(#fc2 27px, #fff 27px 31px, #fc2 31px); }

.mark { position: absolute; right: 2px; bottom: 10px; font: 300 51px/72px "Noto Sans CJK SC", sans-serif; color: #b5b5b5; }
```
